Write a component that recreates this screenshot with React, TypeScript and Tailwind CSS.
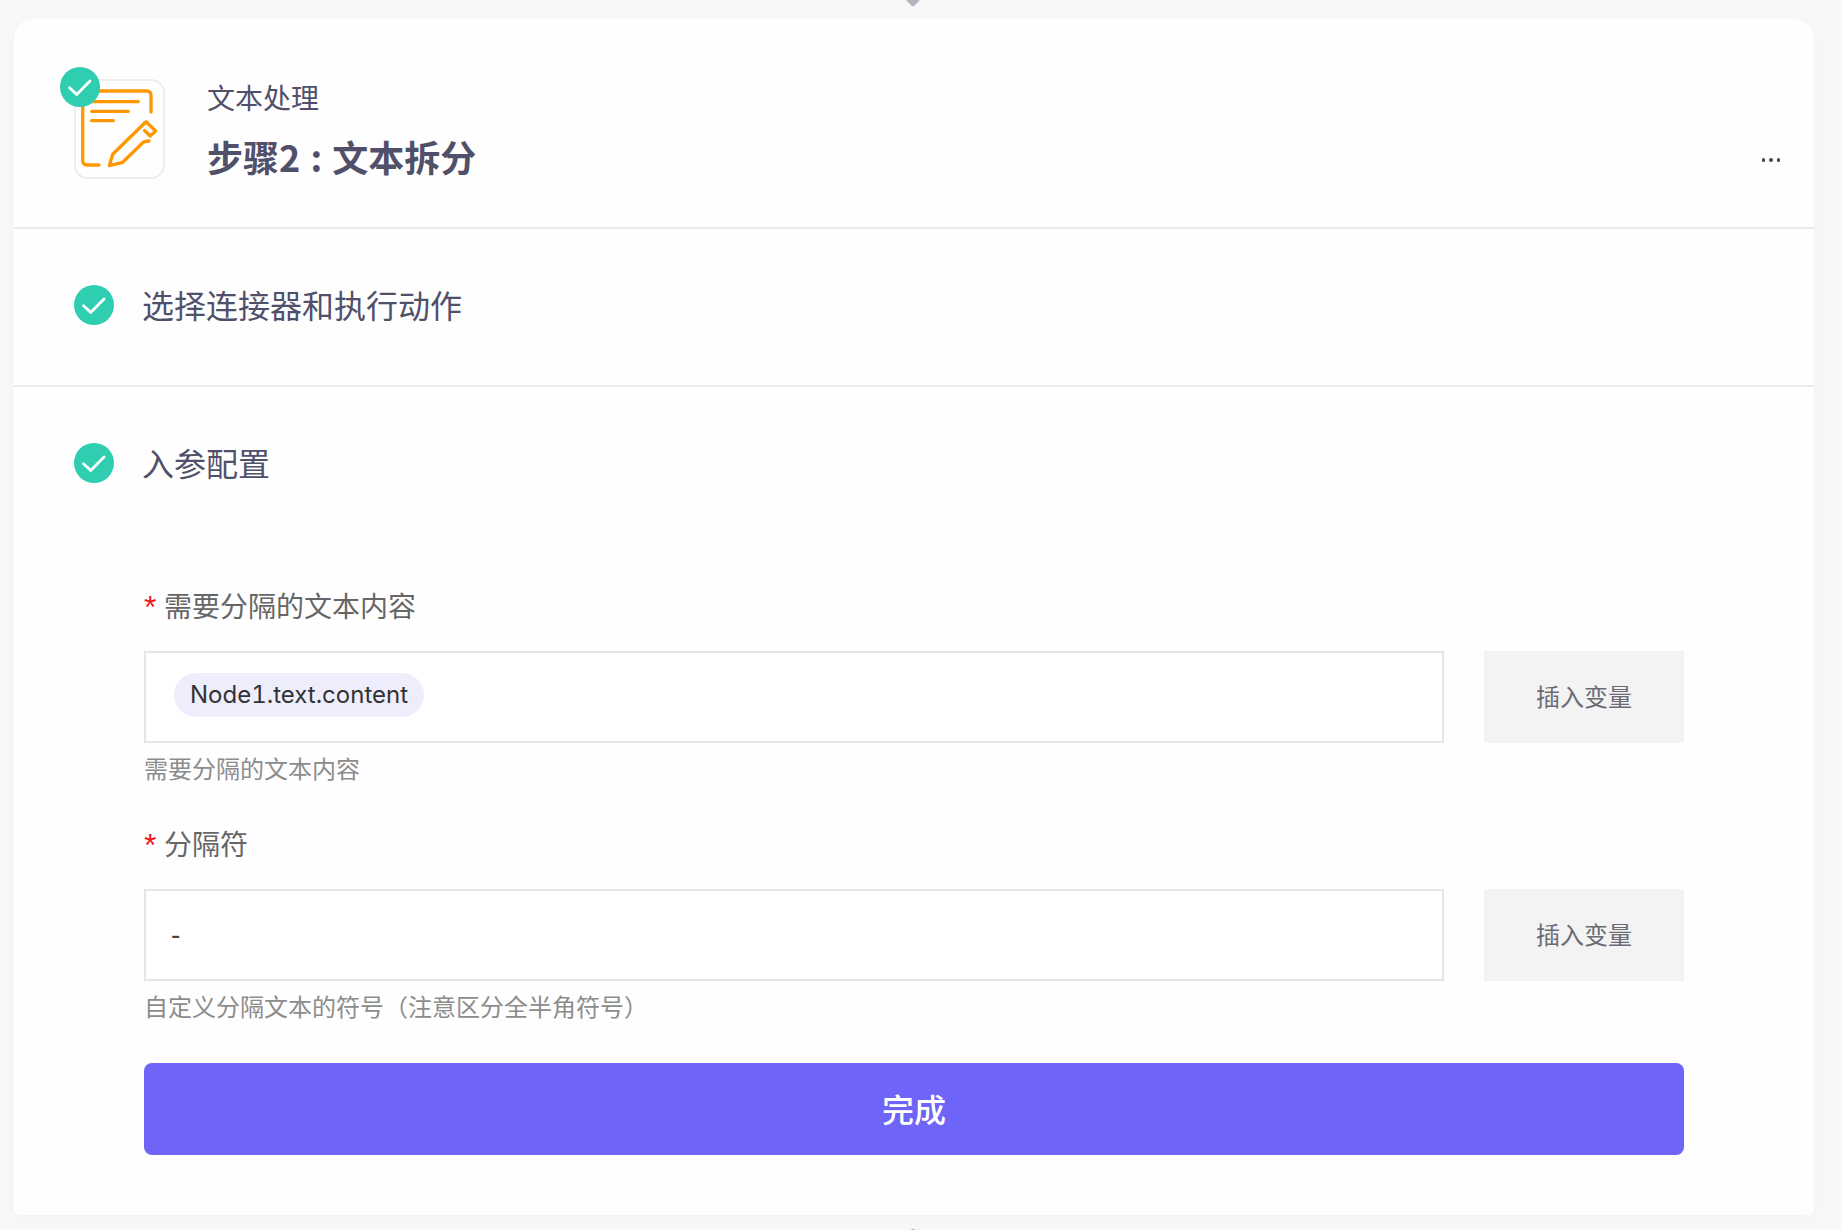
import React from 'react';

function CheckBadge() {
    return (
        <svg width="40" height="40" viewBox="0 0 40 40" className="block shrink-0">
            <circle cx="20" cy="20" r="20" fill="#2fceb0" />
            <path d="M9.500 20.800l7.200 6.600L30 14" fill="none" stroke="#fff" strokeWidth="2.800" strokeLinecap="round" strokeLinejoin="round" />
        </svg>
    );
}

function NoteIcon() {
    return (
        <svg width="91" height="100" viewBox="0 0 91 100" className="block" fill="none" stroke="#ff9800" strokeWidth="3.300" strokeLinecap="round" strokeLinejoin="round">
            <path d="M25 86H12.700a4 4 0 0 1-4-4V16a4 4 0 0 1 4-4H73a4 4 0 0 1 4 4v17" />
            <path d="M17.700 22.700H64.300M17.700 32.300H54.300M17.700 41.700H39.300" />
            <path d="M70.500 51.500l5.700 5.500 5.500-5-9.700-9.300-33.300 32.600-3.400 11.400 13.400-3.400 20.600-20c1.700-.8 3.200-1.300 5.700-1.300" />
        </svg>
    );
}

function Field({ label, help, children }: { label: string; help: string; children: React.ReactNode }) {
    return (
        <div className="h-[238px]">
            <div className="flex h-10 -translate-y-px items-center text-[28px] text-[#666666]">
                <span className="w-[20px] self-start pt-[2px] font-['Liberation_Sans',sans-serif] text-[32px] leading-10 text-[#f0141c]">*</span>
                {label}
            </div>
            <div className="mt-[25px] flex gap-10">
                <div className="flex h-[92px] w-[1300px] items-center border-2 border-[#e6e6e6] bg-white">{children}</div>
                <button className="h-[92px] w-[200px] bg-[#f3f3f3] pb-[2px] text-2xl text-[#6b6b75]">插入变量</button>
            </div>
            <p className="mt-[13px] text-2xl leading-6 text-[#8c8c8c]">{help}</p>
        </div>
    );
}

export default function App() {
    return (
        <div className="relative flex h-[1230px] flex-col overflow-hidden bg-[#f8f8f8] pl-[14px] pr-[28px] pt-[19px] font-['Noto_Sans_CJK_SC',sans-serif]">
            {/* connectors between steps */}
            <div className="absolute left-[908px] top-[-5px] size-[10px] rotate-45 rounded-[2px] bg-[#b5b5bd]" />
            <div className="absolute bottom-[-10px] left-[908px] size-[10px] rotate-45 rounded-[2px] bg-[#b5b5bd]" />

            <div className="h-[1196px] rounded-t-[20px] rounded-b-[6px] bg-[#fefefe] shadow-[0_4px_20px_rgba(0,0,0,0.025)]">
                {/* step header */}
                <div className="flex h-[210px] border-b-2 border-[#ebebeb] pl-[60px] pr-[34px] pt-[60px]">
                    <div className="relative h-[100px] w-[91px] rounded-[14px] border-2 border-[#eeeeee]">
                        <div className="absolute -m-[2px]">
                            <NoteIcon />
                        </div>
                        <div className="absolute left-[-16px] top-[-14px]">
                            <CheckBadge />
                        </div>
                    </div>
                    <div className="ml-[42px] text-[#50506b]">
                        <div className="h-9 text-[28px] leading-9">文本处理</div>
                        <div className="mt-[18px] text-[36px] leading-[46px] font-semibold">
                            步骤<span className="tracking-[1px]">2 : </span>文本拆分
                        </div>
                    </div>
                    <div className="ml-auto mt-[79px] flex h-[4px] gap-1">
                        <i className="size-[3.500px] rounded-full bg-[#444444]" />
                        <i className="size-[3.500px] rounded-full bg-[#444444]" />
                        <i className="size-[3.500px] rounded-full bg-[#444444]" />
                    </div>
                </div>

                <div className="flex h-[158px] gap-[28px] border-b-2 border-[#ebebeb] pl-[60px] pt-[56px]">
                    <CheckBadge />
                    <div className="-translate-y-px text-[32px] leading-10 text-[#50506b]">选择连接器和执行动作</div>
                </div>

                <div className="flex gap-[28px] pl-[60px] pt-[56px]">
                    <CheckBadge />
                    <div className="-translate-y-px text-[32px] leading-10 text-[#50506b]">入参配置</div>
                </div>

                {/* parameters form */}
                <div className="ml-[130px] mt-[103px] w-[1540px]">
                    <Field label="需要分隔的文本内容" help="需要分隔的文本内容">
                        <span className="mb-1 ml-[28px] flex h-11 items-center rounded-[22px] bg-[#eeedfc] px-4 font-['Inter',sans-serif] text-2xl tabular-nums text-[#333333]">
                            Node1.text.content
                        </span>
                    </Field>
                    <Field label="分隔符" help="自定义分隔文本的符号（注意区分全半角符号）">
                        <span className="mb-px ml-[25px] font-['Liberation_Sans',sans-serif] text-[28px] text-[#444444]">-</span>
                    </Field>
                    <button className="mt-px h-[92px] w-full rounded-lg bg-[#6e64f8] pb-[2px] text-[32px] font-medium text-white">完成</button>
                </div>
            </div>
        </div>
    );
}
